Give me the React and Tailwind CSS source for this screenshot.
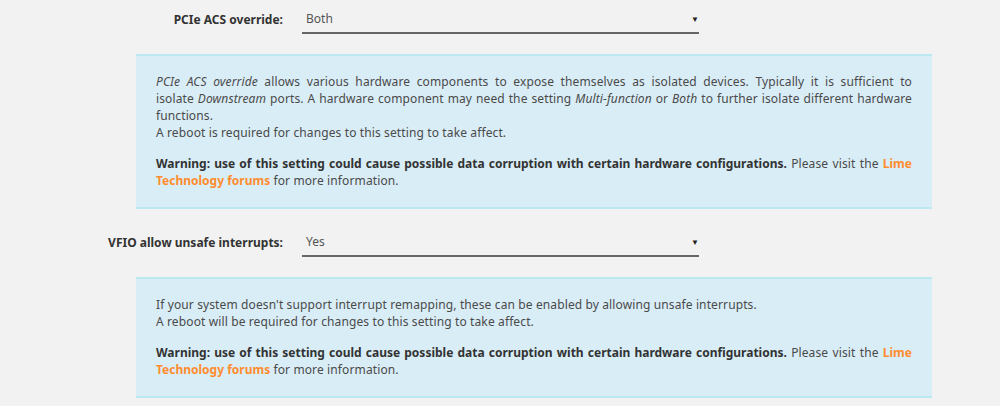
import React from "react";

const Select = ({ value }) => (
  <div className="w-[397px] h-[28px] border-b-2 border-[#666] flex items-center justify-between pl-[4px] pr-0 text-[#555]">
    <span>{value}</span>
    <span className="text-[8px] text-[#222]">▼</span>
  </div>
);

const Row = ({ label, value }) => (
  <div className="flex items-center">
    <div className="w-[283px] text-right font-bold text-[#333]">{label}</div>
    <div className="ml-[19px]">
      <Select value={value} />
    </div>
  </div>
);

const Warning = () => (
  <p className="mt-[14px]">
    <b className="text-[#333] tracking-normal">Warning: use of this setting could cause possible data corruption with certain hardware configurations.</b>{" "}
    Please visit the <a className="font-bold text-[#ff8c2f] tracking-normal">Lime Technology forums</a> for more information.
  </p>
);

const InfoBox = ({ children }) => (
  <div className="ml-[136px] w-[796px] bg-[#d9edf7] border-y-2 border-[#bce8f1] pt-[17px] pb-[18px] px-[20px] text-justify text-[#4a4a4a] leading-[17px] tracking-[0.12px]">
    {children}
  </div>
);

export default function App() {
  return (
    <div className="w-[1000px] h-[406px] bg-[#f2f2f2] overflow-hidden text-[12px] pt-[6px]" style={{ fontFamily: '"Noto Sans", "Open Sans", sans-serif' }}>
      <Row label="PCIe ACS override:" value="Both" />
      <div className="mt-[20px]">
        <InfoBox>
          <p>
            <i>PCIe ACS override</i> allows various hardware components to expose themselves as isolated devices. Typically it is sufficient to isolate{"\u00A0"}<i>Downstream</i> ports. A hardware component may need the setting <i>Multi-function</i> or <i>Both</i> to further isolate different hardware functions.
            <br />
            A reboot is required for changes to this setting to take affect.
          </p>
          <Warning />
        </InfoBox>
      </div>
      <div className="mt-[20px]">
        <Row label="VFIO allow unsafe interrupts:" value="Yes" />
      </div>
      <div className="mt-[20px]">
        <InfoBox>
          <p className="text-left">
            If your system doesn't support interrupt remapping, these can be enabled by allowing unsafe interrupts.
            <br />
            A reboot will be required for changes to this setting to take affect.
          </p>
          <Warning />
        </InfoBox>
      </div>
    </div>
  );
}
